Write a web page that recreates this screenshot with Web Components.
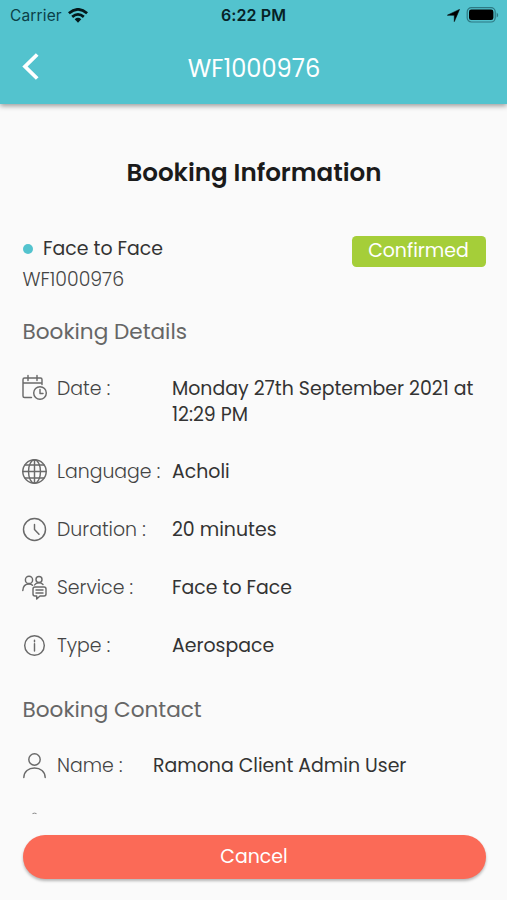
<!DOCTYPE html>
<html lang="en">
<head>
<meta charset="utf-8">
<title>Booking Information</title>
<style>
html,body{margin:0;height:100%;overflow:hidden;background:#fafafa}
body{font-family:Poppins,Inter,"Liberation Sans",sans-serif;color:#333}
</style>
</head>
<body>
<booking-app></booking-app>
<script>
const define = (name, html, after) => {
  const t = document.createElement('template');
  t.innerHTML = html;
  customElements.define(name, class extends HTMLElement {
    constructor() {
      super();
      this.attachShadow({mode: 'open'}).append(t.content.cloneNode(true));
    }
    connectedCallback() { if (after) after(this); }
  });
};

const icons = {
  date: '<path d="M9.5 22.5H2.5Q1 22.5 1 21V4.500Q1 3 2.500 3H18.500Q20 3 20 4.500V9.500M1 8H20M6 .5v5M15 .5v5"/><circle cx="18" cy="18" r="6.300"/><path d="M18 14.500V18.500H21"/>',
  globe: '<circle cx="12.500" cy="12.500" r="11.700"/><ellipse cx="12.500" cy="12.500" rx="6" ry="11.700"/><path d="M12.500 .8V24.200M.8 12.500H24.200M3 6H22M3 19H22"/>',
  clock: '<circle cx="12.500" cy="12.500" r="11"/><path d="M12.500 7.500V12.500L17 17.300"/>',
  service: '<circle cx="7" cy="4.900" r="3.600"/><circle cx="17" cy="4.500" r="3"/><path d="M.8 15.500C1 11.500 3.500 9 7 9Q9.200 9 10.500 10.200M12.500 10C13.500 8.300 15 7.800 17 7.800Q19.500 7.800 21 9.500M13 12H22Q24 12 24 14V19Q24 21 22 21H18L14.700 24V21H13Q11 21 11 19V14Q11 12 13 12M14 15H21M14 18H21"/>',
  info: '<circle cx="12.500" cy="12.500" r="9.800"/><path d="M12.500 10.800V18M12.500 7.300V8.800"/>',
  user: '<circle cx="12.500" cy="6.500" r="5.700"/><path d="M1.800 24.500C2 18.500 6.500 15 12.500 15S23 18.500 23.200 24.500"/>'
};
define('line-icon', `<style>:host{display:block;width:25px;height:25px}svg{display:block;fill:none;stroke:#6a6a6a;stroke-width:1.45;stroke-linecap:round;stroke-linejoin:round;overflow:visible}</style><svg width="25" height="25" viewBox="0 0 25 25"></svg>`);

define('status-bar', `<style>
:host{display:grid;grid-template-columns:1fr auto 1fr;align-items:center;height:30px;padding:0 8px 0 10px;font-family:Inter,"Liberation Sans",sans-serif;font-size:15.500px;color:#0b3f48}
.l,.r{display:flex;align-items:center}.l{gap:6px;letter-spacing:.15px}.r{justify-content:flex-end;gap:6px}
.t{color:#062226;font-weight:600;font-size:16px;letter-spacing:.1px;margin-right:2px}svg{display:block}
</style>
<div class="l"><span>Carrier</span>
<svg width="20" height="15" viewBox="0 0 20 15" fill="none" stroke="#04181b" stroke-width="2.800"><path d="M.9 5.300Q10-2.500 19.100 5.300M4.200 8.800Q10 4 15.800 8.800"/><path d="M6.700 11.200Q10 8.500 13.300 11.200L10 14.700Z" fill="#04181b" stroke="none"/></svg></div>
<span class="t">6:22 PM</span>
<div class="r"><svg width="13" height="13" viewBox="0 0 13 13"><path d="M12.500 .4L7.300 12.600V6.200H.4Z" fill="#000" stroke="#000" stroke-width=".6" stroke-linejoin="round"/></svg>
<svg width="33" height="16" viewBox="0 0 33 16"><rect x="1.200" y=".7" width="28" height="14.300" rx="4.200" fill="none" stroke="#2d7983" stroke-width="1.200"/><rect x="3" y="2.500" width="24.400" height="10.600" rx="2.300"/><path d="M30.700 5.500Q32.200 6.500 32.200 8T30.700 10.500Z" fill="#2d7983"/></svg></div>`);

define('app-header', `<style>
:host{display:block;height:103.5px;background:#53c3ce;box-shadow:0 2px 5px rgba(0,0,0,.38);position:relative}
.nav{display:grid;grid-template-columns:1fr auto 1fr;align-items:center;height:78px;padding:0 19px 0 20px;color:#fff;font-size:24.100px;line-height:30px}
svg{display:block;margin-top:-7px}
</style><status-bar></status-bar><div class="nav"><svg width="22" height="30" viewBox="0 0 22 30" fill="none" stroke="#fff" stroke-width="3.800"><path d="M17.200 3.500L5 15.500L17.200 27.500"/></svg><slot></slot><span></span></div>`);

define('status-badge', `<style>:host{display:block;box-sizing:border-box;width:134px;height:31px;border-radius:4.500px;background:#a5ce39;color:#fff;font-size:18.900px;line-height:30px;text-align:center}</style><slot></slot>`);

define('booking-summary', `<style>
:host{display:flex;justify-content:space-between;align-items:flex-start;height:72px}
.k{display:flex;align-items:center;gap:10.500px;font-size:18.900px;line-height:32px}
.k i{width:10px;height:10px;border-radius:50%;background:#53c3ce;margin-top:-1px}
.id{font-size:18.900px;line-height:30px;font-weight:300;color:#444}
status-badge{margin-top:2.500px}
</style><div><div class="k"><i></i><slot name="kind"></slot></div><div class="id"><slot name="id"></slot></div></div><status-badge><slot name="status"></slot></status-badge>`);

define('section-title', `<style>:host{display:block;font-size:21.600px;line-height:54px;color:#666}</style><slot></slot>`);

define('detail-row', `<style>
:host{display:grid;grid-template-columns:34.500px var(--label,115px) 1fr;padding:16px 0;font-size:18.900px;line-height:26px}
line-icon{margin:-.5px 0 0 -.8px}
.l{color:#444;font-weight:300}.v{color:#333}
.l,.v{white-space:nowrap}
</style><line-icon></line-icon><div class="l"><slot name="label"></slot></div><div class="v"><slot></slot></div>`,
  el => {
    const i = el.shadowRoot.querySelector('line-icon');
    i.shadowRoot.querySelector('svg').innerHTML = icons[el.getAttribute('icon')];
  });

define('action-button', `<style>:host{display:block;height:44px;border-radius:22px;background:#fb6a57;color:#fff;font-size:18.900px;line-height:43px;text-align:center;box-shadow:0 2px 3px rgba(0,0,0,.28)}</style><slot></slot>`);

define('booking-app', `<style>
:host{display:flex;flex-direction:column;height:900px;width:507px;background:#fafafa;overflow:hidden}
app-header{flex:none}
main{flex:1;min-height:0;overflow:hidden;padding:0 21.500px 0 22.500px}
h1{margin:0;padding-top:39px;height:90.500px;font-size:24.600px;line-height:60px;font-weight:600;color:#1b1b1b;text-align:center}
.contact{line-height:55px;padding-top:7px}
.name{--label:96px}
.date{padding:16.500px 0 15.500px}
.date line-icon{margin-top:-1px}
.next{display:block;margin:17px 0 0 8px}
footer{flex:none;padding:0 21.500px 21px 22.500px}
</style>
<app-header>WF1000976</app-header>
<main>
<h1>Booking Information</h1>
<booking-summary><span slot="kind">Face to Face</span><span slot="id">WF1000976</span><span slot="status">Confirmed</span></booking-summary>
<section-title>Booking Details</section-title>
<detail-row class="date" icon="date"><span slot="label">Date :</span><div>Monday 27th September 2021 at</div><div>12:29 PM</div></detail-row>
<detail-row icon="globe"><span slot="label">Language :</span>Acholi</detail-row>
<detail-row icon="clock"><span slot="label">Duration :</span>20 minutes</detail-row>
<detail-row icon="service"><span slot="label">Service :</span>Face to Face</detail-row>
<detail-row icon="info"><span slot="label">Type :</span>Aerospace</detail-row>
<section-title class="contact">Booking Contact</section-title>
<detail-row class="name" icon="user"><span slot="label">Name :</span>Ramona Client Admin User</detail-row>
<svg class="next" width="8" height="3" viewBox="0 0 8 3"><path d="M1.500 1.600Q3.500 .7 5.500 1.600" fill="none" stroke="#888" stroke-width="1"/></svg>
</main>
<footer><action-button>Cancel</action-button></footer>`);
</script>
</body>
</html>
